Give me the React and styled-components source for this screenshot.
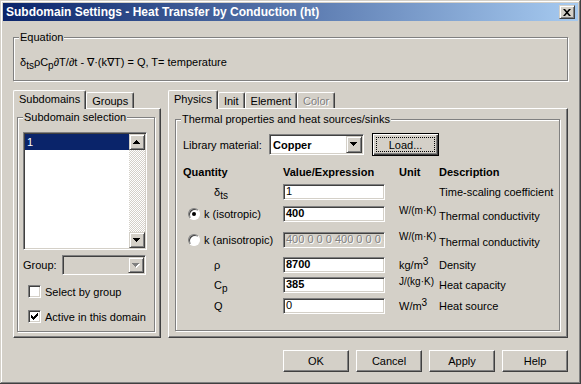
import React from 'react';
import styled, { createGlobalStyle } from 'styled-components';

const face = '#d4d0c8';

const GlobalStyle = createGlobalStyle`
  html, body { margin: 0; padding: 0; background: ${face}; }
  body {
    font-family: "Liberation Sans", Arial, sans-serif;
    font-size: 11px;
    color: #000;
  }
  * { box-sizing: border-box; }
`;

const Window = styled.div`
  width: 581px;
  height: 384px;
  padding: 3px;
  background: ${face};
  box-shadow: inset -1px -1px 0 #404040, inset 1px 1px 0 ${face},
    inset -2px -2px 0 #808080, inset 2px 2px 0 #fff;
  display: flex;
  flex-direction: column;
`;

const TitleBar = styled.div`
  flex: none;
  height: 18px;
  display: flex;
  align-items: center;
  justify-content: space-between;
  padding: 0 3px 0 3px;
  background: linear-gradient(to right, #0a246a, #a6caf0);
  color: #fff;
  font-weight: bold;
  font-size: 12px;
`;

const raised = `
  border: 1px solid;
  border-color: ${face} #404040 #404040 ${face};
  box-shadow: inset 1px 1px 0 #fff, inset -1px -1px 0 #808080;
  background: ${face};
`;

const sunken = `
  border: 1px solid;
  border-color: #808080 #fff #fff #808080;
  box-shadow: inset 1px 1px 0 #404040, inset -1px -1px 0 ${face};
`;

const CloseButton = styled.div`
  width: 16px;
  height: 14px;
  ${raised}
  display: flex;
  align-items: center;
  justify-content: center;
`;

const Content = styled.div`
  flex: 1;
  display: flex;
  flex-direction: column;
  padding: 16px 10px 0 10px;
`;

const GroupBox = styled.div`
  position: relative;
  border: 1px solid #808080;
  box-shadow: inset 1px 1px 0 #fff, 1px 1px 0 #fff;
  flex: ${p => (p.$fill ? 1 : 'none')};
  display: flex;
  flex-direction: column;
`;

const Legend = styled.span`
  position: absolute;
  top: -7px;
  left: 5px;
  padding: 0 1px;
  background: ${face};
  line-height: 13px;
`;

const EquationBox = styled(GroupBox)`
  height: 44px;
  padding: 17px 0 0 6px;
  line-height: 14px;
`;

const Sub = styled.span`
  font-size: 10px;
  position: relative;
  top: 3px;
`;

const Sup = styled.span`
  font-size: 10px;
  position: relative;
  top: -4px;
`;

const Panels = styled.div`
  margin-top: 9px;
  height: 248px;
  display: flex;
  gap: 7px;
`;

const Column = styled.div`
  width: ${p => p.$w}px;
  display: flex;
  flex-direction: column;
`;

const TabStrip = styled.div`
  height: 18px;
  display: flex;
  align-items: flex-end;
`;

const Tab = styled.div`
  position: relative;
  z-index: ${p => (p.$active ? 1 : 0)};
  height: ${p => (p.$active ? 19 : 16)}px;
  margin-bottom: ${p => (p.$active ? -1 : 0)}px;
  padding: 0 5px ${p => (p.$active ? 2 : 0)}px;
  display: flex;
  align-items: center;
  background: ${face};
  border: 1px solid;
  border-color: #fff #404040 transparent #fff;
  border-bottom: none;
  border-radius: 2px 2px 0 0;
  box-shadow: inset -1px 0 0 #808080;
  color: ${p => (p.$disabled ? '#808080' : '#000')};
  text-shadow: ${p => (p.$disabled ? '1px 1px 0 #fff' : 'none')};
  white-space: nowrap;
`;

const TabPanel = styled.div`
  flex: 1;
  display: flex;
  flex-direction: column;
  border: 1px solid;
  border-color: #fff #404040 #404040 #fff;
  box-shadow: inset -1px -1px 0 #808080;
  padding: ${p => p.$pad};
`;

const GroupInner = styled.div`
  display: flex;
  flex-direction: column;
  padding: ${p => p.$pad};
`;

const ListBox = styled.div`
  height: 118px;
  display: flex;
  background: #fff;
  ${sunken}
  padding: 1px;
`;

const ListItems = styled.div`
  flex: 1;
`;

const ListItem = styled.div`
  height: 16px;
  line-height: 16px;
  padding-left: 2px;
  background: ${p => (p.$selected ? '#0a246a' : 'transparent')};
  color: ${p => (p.$selected ? '#fff' : '#000')};
`;

const ScrollBar = styled.div`
  width: 16px;
  display: flex;
  flex-direction: column;
  background: repeating-conic-gradient(#fff 0 25%, ${face} 0 50%) 0 0 / 2px 2px;
`;

const ArrowButton = styled.div`
  width: 16px;
  height: ${p => p.$h || 16}px;
  ${raised}
  display: flex;
  align-items: center;
  justify-content: center;
  margin-top: ${p => (p.$bottom ? 'auto' : 0)};
  flex: none;
`;

const FieldRow = styled.div`
  display: flex;
  align-items: center;
  height: ${p => p.$h}px;
  margin-top: ${p => p.$mt || 0}px;
`;

const FieldLabel = styled.span`
  width: ${p => p.$w}px;
  flex: none;
`;

const Combo = styled.div`
  width: ${p => p.$w}px;
  height: ${p => p.$h}px;
  display: flex;
  align-items: center;
  ${sunken}
  padding: 1px;
  background: ${p => (p.$disabled ? face : '#fff')};
  font-weight: bold;
`;

const ComboText = styled.span`
  flex: 1;
  padding-left: 2px;
`;

const CheckRow = styled.label`
  display: flex;
  align-items: center;
  gap: 4px;
  height: 13px;
  margin-top: ${p => p.$mt}px;
  padding-left: 5px;
`;

const CheckBox = styled.span`
  width: 13px;
  height: 13px;
  background: #fff;
  ${sunken}
  display: flex;
  align-items: center;
  justify-content: center;
`;

const Button = styled.div`
  width: ${p => p.$w}px;
  height: ${p => p.$h}px;
  margin-left: ${p => p.$ml || 0}px;
  display: flex;
  align-items: center;
  justify-content: center;
  background: ${face};
  border: 1px solid;
  border-color: ${p => (p.$default ? '#000' : '#fff #404040 #404040 #fff')};
  box-shadow: ${p =>
    p.$default
      ? 'inset 1px 1px 0 #fff, inset -1px -1px 0 #404040, inset -2px -2px 0 #808080'
      : 'inset -1px -1px 0 #808080'};
  padding: ${p => (p.$default ? '3px' : 0)};
`;

const FocusBox = styled.span`
  flex: 1;
  align-self: stretch;
  display: flex;
  align-items: center;
  justify-content: center;
  border: 1px dotted #000;
`;

const Table = styled.div`
  display: grid;
  grid-template-columns: 100px 109px 47px 1fr;
  grid-template-rows: 20px 22px 26px 25px 20px 21px 17px;
  margin-top: 8px;
  align-items: start;
`;

const Head = styled.div`
  font-weight: bold;
  line-height: 16px;
  padding-left: ${p => p.$indent || 0}px;
`;

const Quantity = styled.div`
  display: flex;
  align-items: center;
  gap: 4px;
  height: 16px;
  padding-left: ${p => p.$indent}px;
`;

const Radio = styled.span`
  width: 12px;
  height: 12px;
  border-radius: 50%;
  background: #fff;
  border: 1px solid;
  border-color: #808080 #fff #fff #808080;
  box-shadow: inset 1px 1px 0 #404040;
  display: flex;
  align-items: center;
  justify-content: center;
  &::after {
    content: '';
    display: ${p => (p.$checked ? 'block' : 'none')};
    width: 4px;
    height: 4px;
    border-radius: 50%;
    background: #000;
  }
`;

const Input = styled.div`
  width: 102px;
  height: 16px;
  ${sunken}
  padding: 0 2px;
  line-height: 13px;
  white-space: nowrap;
  overflow: hidden;
  background: ${p => (p.$disabled ? face : '#fff')};
  color: ${p => (p.$disabled ? '#808080' : '#000')};
  text-shadow: ${p => (p.$disabled ? '1px 1px 0 #fff' : 'none')};
  font-weight: ${p => (p.$bold ? 'bold' : 'normal')};
`;

const Unit = styled.div`
  padding-left: 7px;
  font-size: ${p => (p.$small ? 10 : 11)}px;
  line-height: ${p => (p.$small ? 10 : 16)}px;
  white-space: nowrap;
`;

const Desc = styled.div`
  line-height: 16px;
  padding-top: ${p => (p.$low ? 2 : 0)}px;
  white-space: nowrap;
`;

const ButtonRow = styled.div`
  margin-top: 12px;
  display: flex;
  justify-content: flex-end;
  gap: 7px;
`;

const ArrowIcon = ({ up, disabled }) => (
  <svg width="8" height="5" viewBox="0 0 8 5" shapeRendering="crispEdges">
    {disabled && <path d={up ? 'M1 5h7L4.5 1z' : 'M1 1h7L4.5 5z'} fill="#fff" />}
    <path d={up ? 'M0 4h7L3.5 0z' : 'M0 0h7L3.5 4z'} fill={disabled ? '#808080' : '#000'} />
  </svg>
);

const CheckIcon = () => (
  <svg width="7" height="7" viewBox="0 0 7 7" shapeRendering="crispEdges">
    <path d="M0 2L2 4L7 0V2L2 7L0 5Z" fill="#000" />
  </svg>
);

const CloseIcon = () => (
  <svg width="8" height="7" viewBox="0 0 8 7">
    <path d="M0 0h2l2 2.3L6 0h2L5 3.5 8 7H6L4 4.7 2 7H0l3-3.5z" fill="#000" />
  </svg>
);

const rows = [
  { q: <>δ<Sub>ts</Sub></>, v: '1', unit: '', desc: 'Time-scaling coefficient' },
  { radio: true, checked: true, q: 'k (isotropic)', v: '400', bold: true, unit: 'W/(m·K)', small: true, desc: 'Thermal conductivity', low: true },
  { radio: true, q: 'k (anisotropic)', v: '400 0 0 0 400 0 0 0 400', disabled: true, unit: 'W/(m·K)', small: true, desc: 'Thermal conductivity', low: true },
  { q: 'ρ', v: '8700', bold: true, unit: <>kg/m<Sup>3</Sup></>, desc: 'Density' },
  { q: <>C<Sub>p</Sub></>, v: '385', bold: true, unit: 'J/(kg·K)', small: true, desc: 'Heat capacity' },
  { q: 'Q', v: '0', unit: <>W/m<Sup>3</Sup></>, desc: 'Heat source' },
];

export default function App() {
  return (
    <>
      <GlobalStyle />
      <Window>
        <TitleBar>
          <span>Subdomain Settings - Heat Transfer by Conduction (ht)</span>
          <CloseButton><CloseIcon /></CloseButton>
        </TitleBar>
        <Content>
          <EquationBox>
            <Legend>Equation</Legend>
            <div>
              δ<Sub>ts</Sub>ρC<Sub>p</Sub>∂T/∂t - ∇·(k∇T) = Q, T= temperature
            </div>
          </EquationBox>

          <Panels>
            <Column $w={148}>
              <TabStrip>
                <Tab $active>Subdomains</Tab>
                <Tab>Groups</Tab>
              </TabStrip>
              <TabPanel $pad="8px 5px 5px 3px">
                <GroupBox $fill>
                  <Legend>Subdomain selection</Legend>
                  <GroupInner $pad="14px 7px 0 5px">
                    <ListBox>
                      <ListItems>
                        <ListItem $selected>1</ListItem>
                      </ListItems>
                      <ScrollBar>
                        <ArrowButton><ArrowIcon up /></ArrowButton>
                        <ArrowButton $bottom><ArrowIcon /></ArrowButton>
                      </ScrollBar>
                    </ListBox>
                    <FieldRow $h={20} $mt={5}>
                      <FieldLabel $w={39}>Group:</FieldLabel>
                      <Combo $w={84} $h={20} $disabled>
                        <ComboText />
                        <ArrowButton $h={16}><ArrowIcon disabled /></ArrowButton>
                      </Combo>
                    </FieldRow>
                    <CheckRow $mt={10}>
                      <CheckBox />
                      Select by group
                    </CheckRow>
                    <CheckRow $mt={12}>
                      <CheckBox><CheckIcon /></CheckBox>
                      Active in this domain
                    </CheckRow>
                  </GroupInner>
                </GroupBox>
              </TabPanel>
            </Column>

            <Column $w={400}>
              <TabStrip>
                <Tab $active>Physics</Tab>
                <Tab>Init</Tab>
                <Tab>Element</Tab>
                <Tab $disabled>Color</Tab>
              </TabStrip>
              <TabPanel $pad="10px 7px 6px 6px">
                <GroupBox $fill>
                  <Legend>Thermal properties and heat sources/sinks</Legend>
                  <GroupInner $pad="13px 0 0 7px">
                    <FieldRow $h={23}>
                      <FieldLabel $w={86}>Library material:</FieldLabel>
                      <Combo $w={95} $h={21}>
                        <ComboText>Copper</ComboText>
                        <ArrowButton $h={17}><ArrowIcon /></ArrowButton>
                      </Combo>
                      <Button $w={67} $h={23} $default $ml={8}>
                        <FocusBox>Load...</FocusBox>
                      </Button>
                    </FieldRow>
                    <Table>
                      <Head>Quantity</Head>
                      <Head>Value/Expression</Head>
                      <Head $indent={7}>Unit</Head>
                      <Head>Description</Head>
                      {rows.map((r, i) => (
                        <React.Fragment key={i}>
                          <Quantity $indent={r.radio ? 5 : 31}>
                            {r.radio && <Radio $checked={r.checked} />}
                            <span>{r.q}</span>
                          </Quantity>
                          <Input $bold={r.bold} $disabled={r.disabled}>{r.v}</Input>
                          <Unit $small={r.small}>{r.unit}</Unit>
                          <Desc $low={r.low}>{r.desc}</Desc>
                        </React.Fragment>
                      ))}
                    </Table>
                  </GroupInner>
                </GroupBox>
              </TabPanel>
            </Column>
          </Panels>

          <ButtonRow>
            <Button $w={66} $h={22}>OK</Button>
            <Button $w={66} $h={22}>Cancel</Button>
            <Button $w={66} $h={22}>Apply</Button>
            <Button $w={66} $h={22}>Help</Button>
          </ButtonRow>
        </Content>
      </Window>
    </>
  );
}
